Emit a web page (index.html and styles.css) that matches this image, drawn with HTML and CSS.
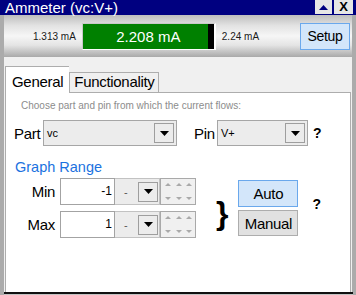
FILE: index.html
```html
<!DOCTYPE html>
<html lang="en">
<head>
<meta charset="UTF-8">
<meta name="viewport" content="width=device-width, initial-scale=1.0">
<title>Ammeter (vc:V+)</title>
<link rel="stylesheet" href="styles.css">
</head>
<body>

<div class="titlebar">
    <span class="title">Ammeter (vc:V+)</span>
    <span class="tb-btn"><svg width="9" height="5" viewBox="0 0 9 5"><polygon points="0,5 4.5,0 9,5" fill="#000080"/></svg></span>
    <span class="tb-btn close">X</span>
</div>

<div class="frame">
    <div class="meter">
        <span class="small-val">1.313 mA</span>
        <div class="display">
            <div class="lcd">2.208 mA</div>
            <div class="lcd-end"></div>
        </div>
        <span class="small-val max-val">2.24 mA</span>
        <button class="btn btn-blue setup">Setup</button>
    </div>

    <div class="tabs">
        <div class="tab active">General</div>
        <div class="tab">Functionality</div>
    </div>

    <div class="panel">
        <p class="hint">Choose part and pin from which the current flows:</p>

        <div class="part-row">
            <span class="lbl part-lbl">Part</span>
            <div class="combo part-combo">
                <span>vc</span>
                <span class="drop"><svg width="9" height="5" viewBox="0 0 9 5"><polygon points="0,0 9,0 4.5,5" fill="#000"/></svg></span>
            </div>
            <span class="lbl pin-lbl">Pin</span>
            <div class="combo pin-combo">
                <span>V+</span>
                <span class="drop"><svg width="9" height="5" viewBox="0 0 9 5"><polygon points="0,0 9,0 4.5,5" fill="#000"/></svg></span>
            </div>
            <span class="help">?</span>
        </div>

        <h3 class="section">Graph Range</h3>

        <div class="range">
            <div class="fields">
                <div class="field-row">
                    <span class="lbl flabel">Min</span>
                    <div class="num">-1</div>
                    <div class="unit">
                        <span class="dash">-</span>
                        <span class="drop"><svg width="9" height="5" viewBox="0 0 9 5"><polygon points="0,0 9,0 4.5,5" fill="#000"/></svg></span>
                    </div>
                    <div class="spin">
                        <svg width="34" height="25" viewBox="0 0 34 25">
                            <g fill="#a9a9a9">
                                <polygon points="4,7 7,4 10,7"/><polygon points="15,7 18,4 21,7"/><polygon points="25,7 28,4 31,7"/>
                                <polygon points="4,18 10,18 7,21"/><polygon points="15,18 21,18 18,21"/><polygon points="25,18 31,18 28,21"/>
                            </g>
                        </svg>
                    </div>
                </div>
                <div class="field-row">
                    <span class="lbl flabel">Max</span>
                    <div class="num">1</div>
                    <div class="unit">
                        <span class="dash">-</span>
                        <span class="drop"><svg width="9" height="5" viewBox="0 0 9 5"><polygon points="0,0 9,0 4.5,5" fill="#000"/></svg></span>
                    </div>
                    <div class="spin">
                        <svg width="34" height="25" viewBox="0 0 34 25">
                            <g fill="#a9a9a9">
                                <polygon points="4,7 7,4 10,7"/><polygon points="15,7 18,4 21,7"/><polygon points="25,7 28,4 31,7"/>
                                <polygon points="4,18 10,18 7,21"/><polygon points="15,18 21,18 18,21"/><polygon points="25,18 31,18 28,21"/>
                            </g>
                        </svg>
                    </div>
                </div>
            </div>
            <span class="brace">}</span>
            <div class="modes">
                <button class="btn btn-blue mode">Auto</button>
                <button class="btn mode manual">Manual</button>
            </div>
            <span class="help range-help">?</span>
        </div>
    </div>

    <div class="status"></div>
</div>

</body>
</html>
```

FILE: styles.css
```css
body {
    margin: 0;
    width: 356px;
    height: 295px;
    overflow: hidden;
    font-family: "Liberation Sans", Arial, sans-serif;
    background-color: #ababab;
}
.titlebar {
    height: 15px;
    display: flex;
    align-items: flex-start;
    background-color: #000080;
    color: #fff;
}
.title {
    flex: 1;
    padding-left: 5px;
    font-size: 15px;
    line-height: 15px;
    white-space: nowrap;
}
.tb-btn {
    width: 17px;
    height: 14px;
    margin-left: 2px;
    display: flex;
    align-items: center;
    justify-content: center;
    background-color: #e6e6e6;
}
.tb-btn.close {
    width: 19px;
    margin-right: 3px;
    color: #000;
    font-weight: bold;
    font-size: 13px;
    line-height: 14px;
}
.frame {
    height: 280px;
    border-left: 4px solid #ababab;
    border-right: 4px solid #ababab;
    background-color: #f0f0f0;
}
.meter {
    height: 42px;
    display: flex;
    align-items: center;
    padding-left: 29px;
    background: linear-gradient(to bottom, #bdbdbd 0%, #e2e2e2 25%, #f6f6f6 50%, #e4e4e4 72%, #a9a9a9 100%);
}
.small-val {
    font-size: 10px;
    color: #1a1a1a;
    white-space: nowrap;
}
.display {
    width: 134px;
    height: 27px;
    margin-left: 6px;
    box-sizing: border-box;
    display: flex;
    border: 1px solid #c9c9c9;
    border-right: 2px solid #fff;
    border-bottom-color: #fff;
}
.lcd {
    flex: 1;
    padding-left: 6px;
    background-color: #008000;
    color: #fff;
    font-size: 15px;
    line-height: 25px;
    text-align: center;
}
.lcd-end {
    width: 6px;
    background-color: #000;
}
.max-val {
    margin-left: 6px;
}
.btn {
    padding: 0;
    box-sizing: border-box;
    border: 1px solid #adadad;
    background-color: #e1e1e1;
    color: #000;
    font-family: "Liberation Sans", Arial, sans-serif;
    font-size: 15px;
    letter-spacing: -0.3px;
}
.btn-blue {
    border-color: #6aa8ec;
    background-color: #d3e6fa;
}
.setup {
    width: 50px;
    height: 27px;
    margin-left: auto;
    margin-right: 2px;
    font-size: 14px;
}
.tabs {
    height: 35px;
    display: flex;
    align-items: flex-end;
    padding-left: 1px;
}
.tab {
    height: 20px;
    box-sizing: border-box;
    padding: 0 3px 0 4px;
    border: 1px solid #adadad;
    border-bottom: none;
    font-size: 15px;
    letter-spacing: -0.3px;
    line-height: 18px;
    background-color: #f0f0f0;
}
.tab.active {
    position: relative;
    height: 27px;
    margin-bottom: -1px;
    padding: 5px 6px 0 6px;
    border-right: none;
    line-height: 20px;
    background-color: #fff;
}
.panel {
    height: 200px;
    box-sizing: border-box;
    margin: 0 1px;
    border: 1px solid #adadad;
    border-bottom: none;
    background-color: #fff;
}
.hint {
    margin: 7px 0 0 15px;
    font-size: 10px;
    line-height: 12px;
    color: #8c8c8c;
}
.part-row {
    height: 26px;
    margin-top: 8px;
    padding-left: 8px;
    display: flex;
    align-items: center;
}
.lbl {
    font-size: 15px;
    letter-spacing: -0.3px;
    color: #000;
}
.part-lbl {
    width: 29px;
}
.pin-lbl {
    width: 23px;
    margin-left: 17px;
}
.combo {
    height: 26px;
    box-sizing: border-box;
    padding-left: 3px;
    display: flex;
    align-items: center;
    border: 1px solid #a6a6a6;
    background-color: #ececec;
    font-size: 11px;
}
.part-combo {
    width: 134px;
}
.pin-combo {
    width: 91px;
}
.drop {
    width: 20px;
    height: 20px;
    box-sizing: border-box;
    margin-left: auto;
    margin-right: 2px;
    display: flex;
    align-items: center;
    justify-content: center;
    border: 1px solid #9e9e9e;
}
.help {
    margin-left: 5px;
    font-size: 14px;
    font-weight: bold;
}
.section {
    margin: 13px 0 0 9px;
    font-size: 14.5px;
    font-weight: normal;
    line-height: 17px;
    color: #1b72e0;
}
.range {
    margin-top: 2px;
    display: flex;
    align-items: center;
}
.fields {
    display: flex;
    flex-direction: column;
    gap: 6px;
}
.field-row {
    height: 27px;
    display: flex;
    align-items: center;
}
.flabel {
    width: 49px;
    margin-right: 5px;
    text-align: right;
}
.num {
    width: 55px;
    height: 27px;
    box-sizing: border-box;
    padding-right: 2px;
    border: 1px solid #a3a3a3;
    font-size: 12px;
    line-height: 24px;
    text-align: right;
}
.unit {
    width: 45px;
    height: 27px;
    box-sizing: border-box;
    display: flex;
    align-items: center;
    border: 1px solid #c2c2c2;
    border-left: none;
    background-color: #ececec;
}
.dash {
    padding-left: 9px;
    font-size: 11px;
    color: #555;
}
.unit .drop {
    margin-right: 1px;
}
.spin {
    width: 36px;
    height: 27px;
    box-sizing: border-box;
    border: 1px solid #a9a9a9;
    background-color: #f0f0f0;
}
.spin svg {
    display: block;
}
.brace {
    margin: 9px 0 0 20px;
    font-family: "Liberation Sans", Arial, sans-serif;
    font-size: 32px;
    font-weight: bold;
    line-height: 30px;
}
.modes {
    margin-left: 10px;
    display: flex;
    flex-direction: column;
    gap: 3px;
}
.mode {
    width: 60px;
    height: 27px;
}
.manual {
    height: 26px;
}
.range-help {
    margin: 0 0 8px 14px;
}
.status {
    height: 4px;
    margin-right: -1px;
    border-top: 2px solid #111;
    background-color: #c4c4c4;
}
```
